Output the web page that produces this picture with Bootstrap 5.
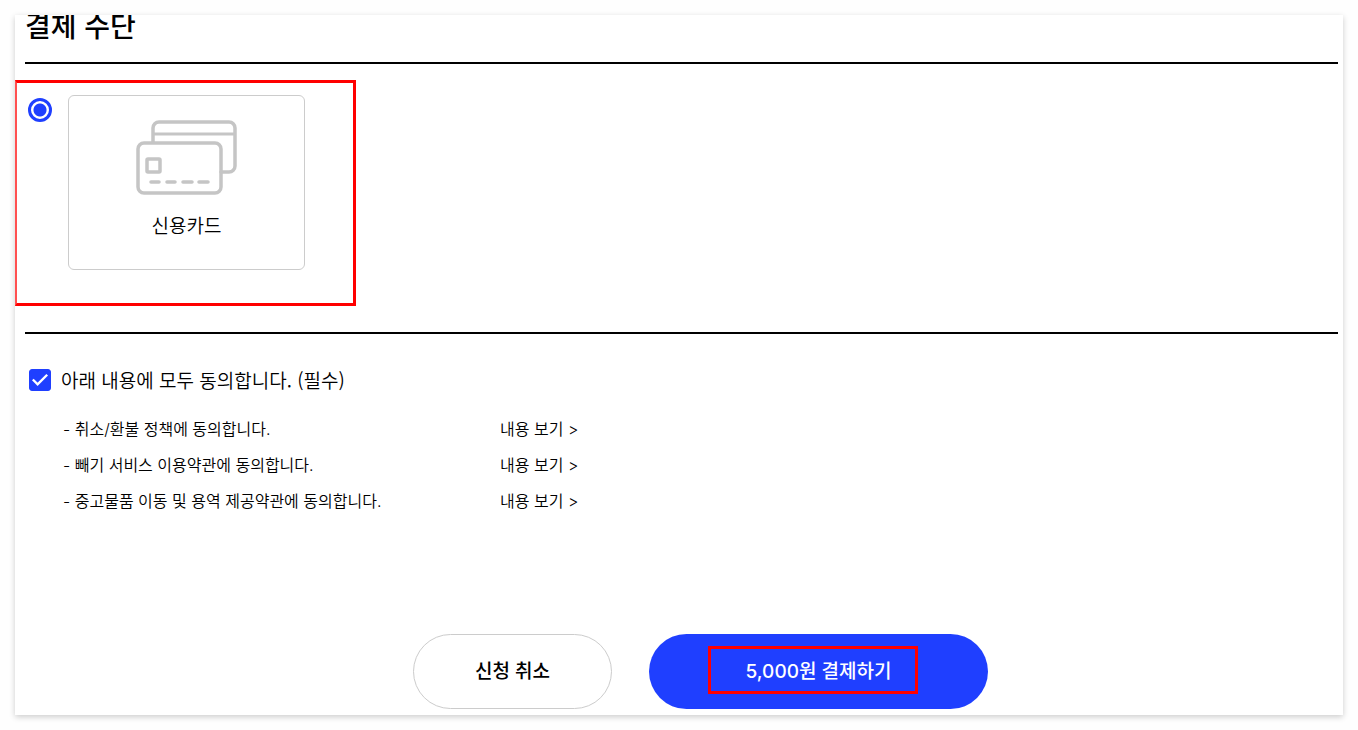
<!DOCTYPE html>
<html lang="ko">
<head>
<meta charset="utf-8">
<meta name="viewport" content="width=device-width, initial-scale=1">
<title>결제 수단</title>
<link href="https://cdn.jsdelivr.net/npm/bootstrap@5.3.0/dist/css/bootstrap.min.css" rel="stylesheet">
<style>
:root { --brand: #1f3fff; --mark: #ff0000; --line: #cccccc; }
body { font-family: "Noto Sans CJK KR", sans-serif; color: #000; background: #fefefe; padding: 15px; }
.sheet { background: #fff; min-height: calc(100vh - 30px); box-shadow: 0 2px 6px rgba(0,0,0,.2); }
.sheet-title { font-size: 28px; font-weight: 500; line-height: 40px; margin: -10px 0 17px; padding-left: 10px; }
.rule { border: 0; border-top: 2px solid #000; opacity: 1; margin: 0 5px 0 10px; }
.pay-area { width: 341px; height: 226px; border: 3px solid var(--mark); border-left: 2px solid #ff5050; margin: 16px 0 26px; padding: 12px 0 0 11px; }
.pay-area .form-check-input { appearance: none; width: 24px; height: 24px; margin: 3px 16px 0 0; border: 3px solid var(--brand); background: radial-gradient(circle, var(--brand) 6px, #fff 7px); }
.method { width: 237px; height: 175px; border: 1px solid var(--line); border-radius: 6px; padding-top: 24px; cursor: pointer; }
.method-name { font-size: 19px; font-weight: 350; line-height: 28px; margin-top: 16px; }
.terms { padding: 32px 14px 0; }
.terms .form-check-input { width: 22px; height: 22px; margin: 0 10px 0 0; border-radius: 3px; }
.terms .form-check-input:checked { background-color: var(--brand); border-color: var(--brand); background-size: 22px 22px; background-image: url("data:image/svg+xml,%3Csvg xmlns='http://www.w3.org/2000/svg' viewBox='0 0 23 23'%3E%3Cpath d='M4 11l5 5 10-10' fill='none' stroke='white' stroke-width='2.500'/%3E%3C/svg%3E"); }
.terms-all { font-size: 19px; font-weight: 350; line-height: 28px; }
.terms-list { font-family: Inter, "Noto Sans CJK KR", sans-serif; font-size: 16px; font-weight: 350; line-height: 36px; margin: 17px 0 0; padding-left: 34px; }
.term-text { width: 437px; }
.actions { gap: 37px; padding: 112px 0 6px 43px; margin-top: auto; }
.action { height: 75px; padding: 8px 0 6px; border-radius: 38px; font-size: 19px; font-weight: 500; font-family: Inter, "Noto Sans CJK KR", sans-serif; color: #000; }
.action-cancel { width: 199px; border: 1px solid var(--line); }
.action-pay, .action-pay:hover { width: 339px; background: var(--brand); color: #fff; }
.highlight { left: 58px; top: 11px; width: 210px; height: 48px; border: 3px solid var(--mark); }
</style>
</head>
<body>
<main class="sheet d-flex flex-column overflow-hidden">
  <h1 class="sheet-title">결제 수단</h1>
  <hr class="rule">
  <div class="pay-area d-flex align-items-start">
    <input class="form-check-input flex-shrink-0" type="radio" name="method" id="credit" checked>
    <label class="method d-flex flex-column align-items-center" for="credit">
      <svg width="101" height="75" viewBox="0 0 101 75" fill="none" stroke="#c5c5c5" stroke-width="3.500" stroke-linecap="round" aria-hidden="true">
        <path d="M17 22V8a6 6 0 0 1 6-6h70a6 6 0 0 1 6 6v38a6 6 0 0 1-6 6h-8"/>
        <path d="M17 14h82" stroke-width="3" stroke-linecap="butt"/>
        <rect x="2" y="23" width="83" height="50" rx="6"/>
        <rect x="11" y="39" width="13" height="13" rx="1" stroke-width="3.500"/>
        <path d="M15 62h8M31 62h8M47 62h9M63 62h9" stroke-width="3.500"/>
      </svg>
      <span class="method-name">신용카드</span>
    </label>
  </div>
  <hr class="rule">
  <section class="terms">
    <div class="d-flex align-items-center">
      <input class="form-check-input flex-shrink-0" type="checkbox" id="agree" checked>
      <label class="terms-all" for="agree">아래 내용에 모두 동의합니다. (필수)</label>
    </div>
    <ul class="terms-list list-unstyled">
      <li class="d-flex"><span class="term-text">- 취소/환불 정책에 동의합니다.</span><a class="text-reset text-decoration-none" href="#">내용 보기 &gt;</a></li>
      <li class="d-flex"><span class="term-text">- 빼기 서비스 이용약관에 동의합니다.</span><a class="text-reset text-decoration-none" href="#">내용 보기 &gt;</a></li>
      <li class="d-flex"><span class="term-text">- 중고물품 이동 및 용역 제공약관에 동의합니다.</span><a class="text-reset text-decoration-none" href="#">내용 보기 &gt;</a></li>
    </ul>
  </section>
  <div class="actions d-flex justify-content-center">
    <button class="btn action action-cancel" type="button">신청 취소</button>
    <button class="btn action action-pay position-relative" type="button">5,000원 결제하기<span class="highlight position-absolute"></span></button>
  </div>
</main>
<script src="https://cdn.jsdelivr.net/npm/bootstrap@5.3.0/dist/js/bootstrap.bundle.min.js"></script>
</body>
</html>
